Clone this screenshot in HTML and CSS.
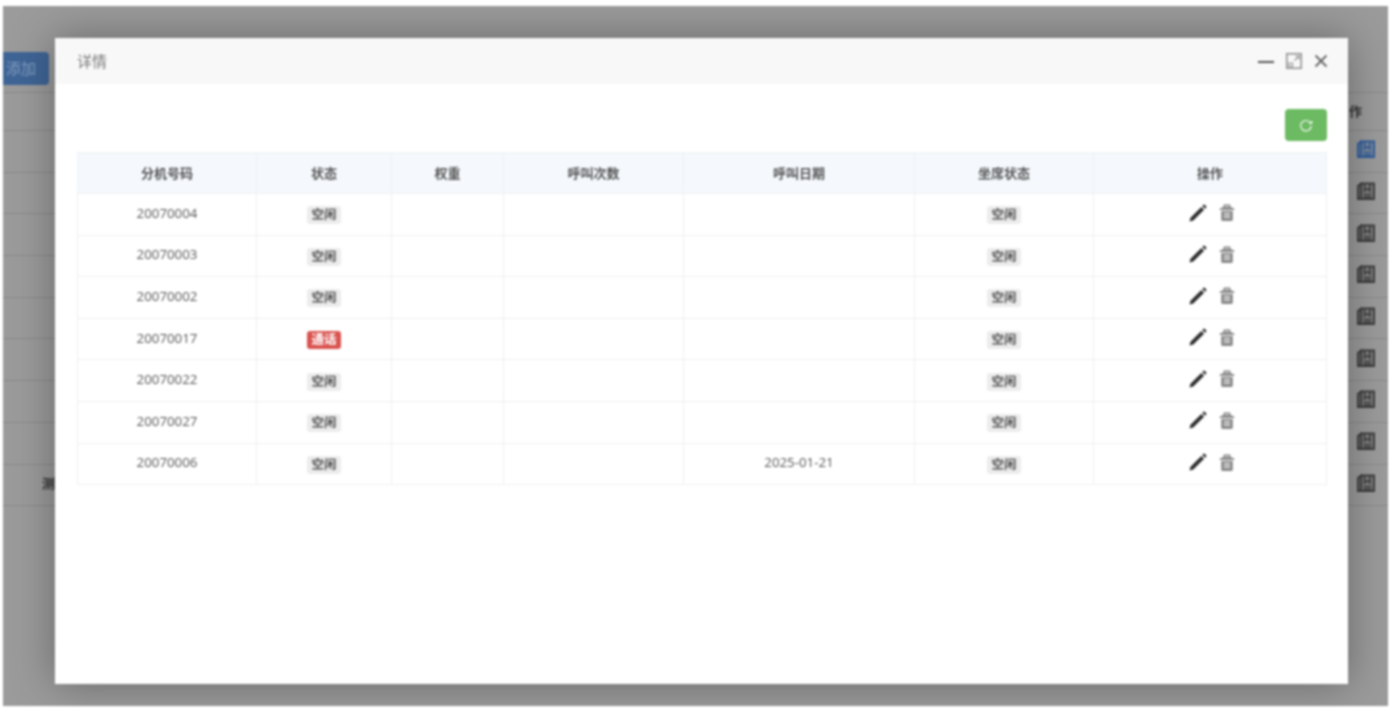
FILE: index.html
```html
<!DOCTYPE html>
<html lang="zh-CN">

<head>
    <meta charset="UTF-8">
    <meta name="viewport" content="width=device-width, initial-scale=1.0">
    <title>详情</title>
    <link rel="stylesheet" href="styles.css">
</head>

<body>
    <svg class="sprites" aria-hidden="true">
        <symbol id="icon-pencil" viewBox="0 0 18 18">
            <path d="M.5 17.500l1-3.800L12.300 2.900l2.800 2.800L4.300 16.500z" fill="#2e2e2e" />
            <path d="M13.300 1.900l.8-.8c.6-.6 1.300-.6 1.900 0l.9.900c.6.600.6 1.300 0 1.900l-.8.8z" fill="#2e2e2e" />
        </symbol>
        <symbol id="icon-trash" viewBox="0 0 16 17">
            <path d="M.8 4.500L4.500 3V1.200c0-.4.3-.7.700-.7h5.600c.4 0 .7.300.7.700V3l3.700 1.500V6H.8zM6 2v.8h4V2z" fill="#8a8a8a" fill-rule="evenodd" />
            <path d="M2.200 7h11.600v8.500c0 .9-.6 1.500-1.500 1.500H3.700c-.9 0-1.500-.6-1.500-1.500zM5 9.200v1.300h6V9.200zm0 3v1.300h6v-1.300z" fill="#8a8a8a" fill-rule="evenodd" />
        </symbol>
        <symbol id="icon-book" viewBox="0 0 18 18">
            <path d="M1 4l3-2.500V16l-3 1.200zM4 1.500h13V17H1" fill="currentColor" fill-opacity="0.25" stroke="currentColor" stroke-width="2" />
            <path d="M7.500 2v7l2.800-2.500L13 9V2M6.500 12.500h8M6.500 15h8" fill="none" stroke="currentColor" stroke-width="1.600" />
        </symbol>
    </svg>

    <div class="screen">
        <div class="page">
            <div class="page-top">
                <button class="add-btn">添加</button>
            </div>
            <div class="page-head"><span>作</span></div>
            <div class="page-row"><svg class="row-icon active"><use href="#icon-book" /></svg></div>
            <div class="page-row"><svg class="row-icon"><use href="#icon-book" /></svg></div>
            <div class="page-row"><svg class="row-icon"><use href="#icon-book" /></svg></div>
            <div class="page-row"><svg class="row-icon"><use href="#icon-book" /></svg></div>
            <div class="page-row"><svg class="row-icon"><use href="#icon-book" /></svg></div>
            <div class="page-row"><svg class="row-icon"><use href="#icon-book" /></svg></div>
            <div class="page-row"><svg class="row-icon"><use href="#icon-book" /></svg></div>
            <div class="page-row"><svg class="row-icon"><use href="#icon-book" /></svg></div>
            <div class="page-row"><span class="row-name">测</span><svg class="row-icon"><use href="#icon-book" /></svg></div>
        </div>

        <div class="modal">
            <div class="modal-header">
                <span class="modal-title">详情</span>
                <div class="modal-tools">
                    <span class="tool-min"></span>
                    <svg class="tool-icon" viewBox="0 0 16 16">
                        <path d="M.8.8h14.400v14.400H.8z" fill="none" stroke="#8c8c8c" stroke-width="1.500" />
                        <path d="M8.500 7.500L13 3M9.500 3H13v3.500" fill="none" stroke="#999" stroke-width="1.200" />
                        <path d="M3 10h3.500v3.500H3z" fill="none" stroke="#999" stroke-width="1.200" />
                    </svg>
                    <svg class="tool-icon close" viewBox="0 0 14 14">
                        <path d="M1.500 1.500l11 11M12.500 1.500l-11 11" fill="none" stroke="#666" stroke-width="1.800" />
                    </svg>
                </div>
            </div>
            <div class="modal-body">
                <div class="toolbar">
                    <button class="refresh-btn" aria-label="刷新">
                        <svg viewBox="0 0 16 16" width="14" height="14">
                            <path d="M13 5.500A6 6 0 1 0 14 9" fill="none" stroke="#fff" stroke-width="1.300" />
                            <path d="M10.800 6.600h4.400V2.800z" fill="#fff" />
                        </svg>
                    </button>
                </div>
                <table class="detail-table">
                    <colgroup>
                        <col class="col-ext">
                        <col class="col-state">
                        <col class="col-weight">
                        <col class="col-count">
                        <col class="col-date">
                        <col class="col-seat">
                        <col>
                    </colgroup>
                    <thead>
                        <tr>
                            <th>分机号码</th>
                            <th>状态</th>
                            <th>权重</th>
                            <th>呼叫次数</th>
                            <th>呼叫日期</th>
                            <th>坐席状态</th>
                            <th>操作</th>
                        </tr>
                    </thead>
                    <tbody>
                        <tr>
                            <td>20070004</td>
                            <td><span class="tag">空闲</span></td>
                            <td></td>
                            <td></td>
                            <td></td>
                            <td><span class="tag">空闲</span></td>
                            <td class="actions"><svg class="edit"><use href="#icon-pencil" /></svg><svg class="del"><use href="#icon-trash" /></svg></td>
                        </tr>
                        <tr>
                            <td>20070003</td>
                            <td><span class="tag">空闲</span></td>
                            <td></td>
                            <td></td>
                            <td></td>
                            <td><span class="tag">空闲</span></td>
                            <td class="actions"><svg class="edit"><use href="#icon-pencil" /></svg><svg class="del"><use href="#icon-trash" /></svg></td>
                        </tr>
                        <tr>
                            <td>20070002</td>
                            <td><span class="tag">空闲</span></td>
                            <td></td>
                            <td></td>
                            <td></td>
                            <td><span class="tag">空闲</span></td>
                            <td class="actions"><svg class="edit"><use href="#icon-pencil" /></svg><svg class="del"><use href="#icon-trash" /></svg></td>
                        </tr>
                        <tr>
                            <td>20070017</td>
                            <td><span class="tag tag-red">通话</span></td>
                            <td></td>
                            <td></td>
                            <td></td>
                            <td><span class="tag">空闲</span></td>
                            <td class="actions"><svg class="edit"><use href="#icon-pencil" /></svg><svg class="del"><use href="#icon-trash" /></svg></td>
                        </tr>
                        <tr>
                            <td>20070022</td>
                            <td><span class="tag">空闲</span></td>
                            <td></td>
                            <td></td>
                            <td></td>
                            <td><span class="tag">空闲</span></td>
                            <td class="actions"><svg class="edit"><use href="#icon-pencil" /></svg><svg class="del"><use href="#icon-trash" /></svg></td>
                        </tr>
                        <tr>
                            <td>20070027</td>
                            <td><span class="tag">空闲</span></td>
                            <td></td>
                            <td></td>
                            <td></td>
                            <td><span class="tag">空闲</span></td>
                            <td class="actions"><svg class="edit"><use href="#icon-pencil" /></svg><svg class="del"><use href="#icon-trash" /></svg></td>
                        </tr>
                        <tr>
                            <td>20070006</td>
                            <td><span class="tag">空闲</span></td>
                            <td></td>
                            <td></td>
                            <td>2025-01-21</td>
                            <td><span class="tag">空闲</span></td>
                            <td class="actions"><svg class="edit"><use href="#icon-pencil" /></svg><svg class="del"><use href="#icon-trash" /></svg></td>
                        </tr>
                    </tbody>
                </table>
            </div>
        </div>
    </div>
</body>

</html>
```

FILE: styles.css
```css
* {
    margin: 0;
    padding: 0;
    box-sizing: border-box;
}

body {
    font-family: 'Open Sans', 'Noto Sans CJK SC', sans-serif;
    background: #fff;
    color: #555;
    height: 708px;
    overflow: hidden;
    padding: 6px 2px 2px 3px;
}

.sprites {
    display: none;
}

.screen {
    position: relative;
    height: 700px;
    background: #9b9b9b;
    overflow: hidden;
    filter: blur(0.9px);
}

/* page behind the dialog */
.page-top {
    height: 86px;
    padding-top: 46px;
}

.add-btn {
    display: block;
    width: 46px;
    height: 33px;
    padding: 0 10px 3px 0;
    border: none;
    border-radius: 0 4px 4px 0;
    background: #3f6596;
    color: #829dc0;
    font-family: inherit;
    font-size: 15px;
}

.page-head {
    height: 39px;
    padding: 8px 26px 0 0;
    border-top: 1px solid #8a8a8a;
    border-bottom: 1px solid #8a8a8a;
    text-align: right;
    font-size: 13px;
    font-weight: bold;
    color: #333;
}

.page-row {
    display: flex;
    align-items: center;
    justify-content: flex-end;
    height: 41.700px;
    padding: 0 13px 4px 0;
    border-bottom: 1px solid #8a8a8a;
}

.row-icon {
    width: 18px;
    height: 18px;
    color: #3d3d3d;
}

.row-icon.active {
    color: #2f5c9c;
}

.row-name {
    position: absolute;
    left: 39px;
    font-size: 13px;
    font-weight: bold;
    color: #333;
}

/* dialog */
.modal {
    position: absolute;
    left: 52px;
    top: 32px;
    width: 1293px;
    height: 646px;
    background: #fff;
    box-shadow: 0 0 40px rgba(0, 0, 0, 0.34);
}

.modal-header {
    display: flex;
    align-items: center;
    justify-content: space-between;
    height: 46px;
    padding: 0 20px 0 22px;
    background: #f8f8f8;
}

.modal-title {
    margin-top: -2px;
    font-size: 15px;
    color: #777;
}

.modal-tools {
    display: flex;
    align-items: center;
    gap: 12px;
}

.tool-min {
    width: 16px;
    height: 2px;
    margin-top: 2px;
    background: #555;
}

.tool-icon {
    width: 16px;
    height: 16px;
}

.tool-icon.close {
    width: 14px;
    height: 14px;
}

.modal-body {
    padding: 25px 21px 0 22px;
}

.toolbar {
    display: flex;
    justify-content: flex-end;
    margin-bottom: 11px;
}

.refresh-btn {
    display: flex;
    align-items: center;
    justify-content: center;
    width: 42px;
    height: 32px;
    border: none;
    border-radius: 4px;
    background: #6cba62;
}

.detail-table {
    width: 1250px;
    table-layout: fixed;
    border-collapse: collapse;
    font-size: 13.300px;
}

.col-ext {
    width: 179px;
}

.col-state {
    width: 135px;
}

.col-weight {
    width: 112px;
}

.col-count {
    width: 180px;
}

.col-date {
    width: 231px;
}

.col-seat {
    width: 179px;
}

.detail-table th,
.detail-table td {
    border: 1px solid #eef0f2;
    text-align: center;
    vertical-align: middle;
}

.detail-table th {
    height: 41px;
    padding-bottom: 2px;
    background: #f5f9fd;
    font-size: 13px;
    font-weight: bold;
    color: #555;
}

.detail-table td {
    height: 41.600px;
    padding-bottom: 3px;
}

.tag {
    display: inline-block;
    width: 34px;
    height: 18px;
    margin-top: 5px;
    border-radius: 3px;
    background: #ececec;
    font-size: 12.500px;
    font-weight: bold;
    line-height: 18px;
    color: #555;
    vertical-align: middle;
}

.tag-red {
    background: #d9534f;
    color: #fff;
}

.detail-table .actions {
    padding: 0 0 5px 4px;
}

.actions svg {
    vertical-align: middle;
}

.edit {
    width: 18px;
    height: 18px;
    margin: 0 12px 0 0;
}

.del {
    width: 16px;
    height: 17px;
}
```
